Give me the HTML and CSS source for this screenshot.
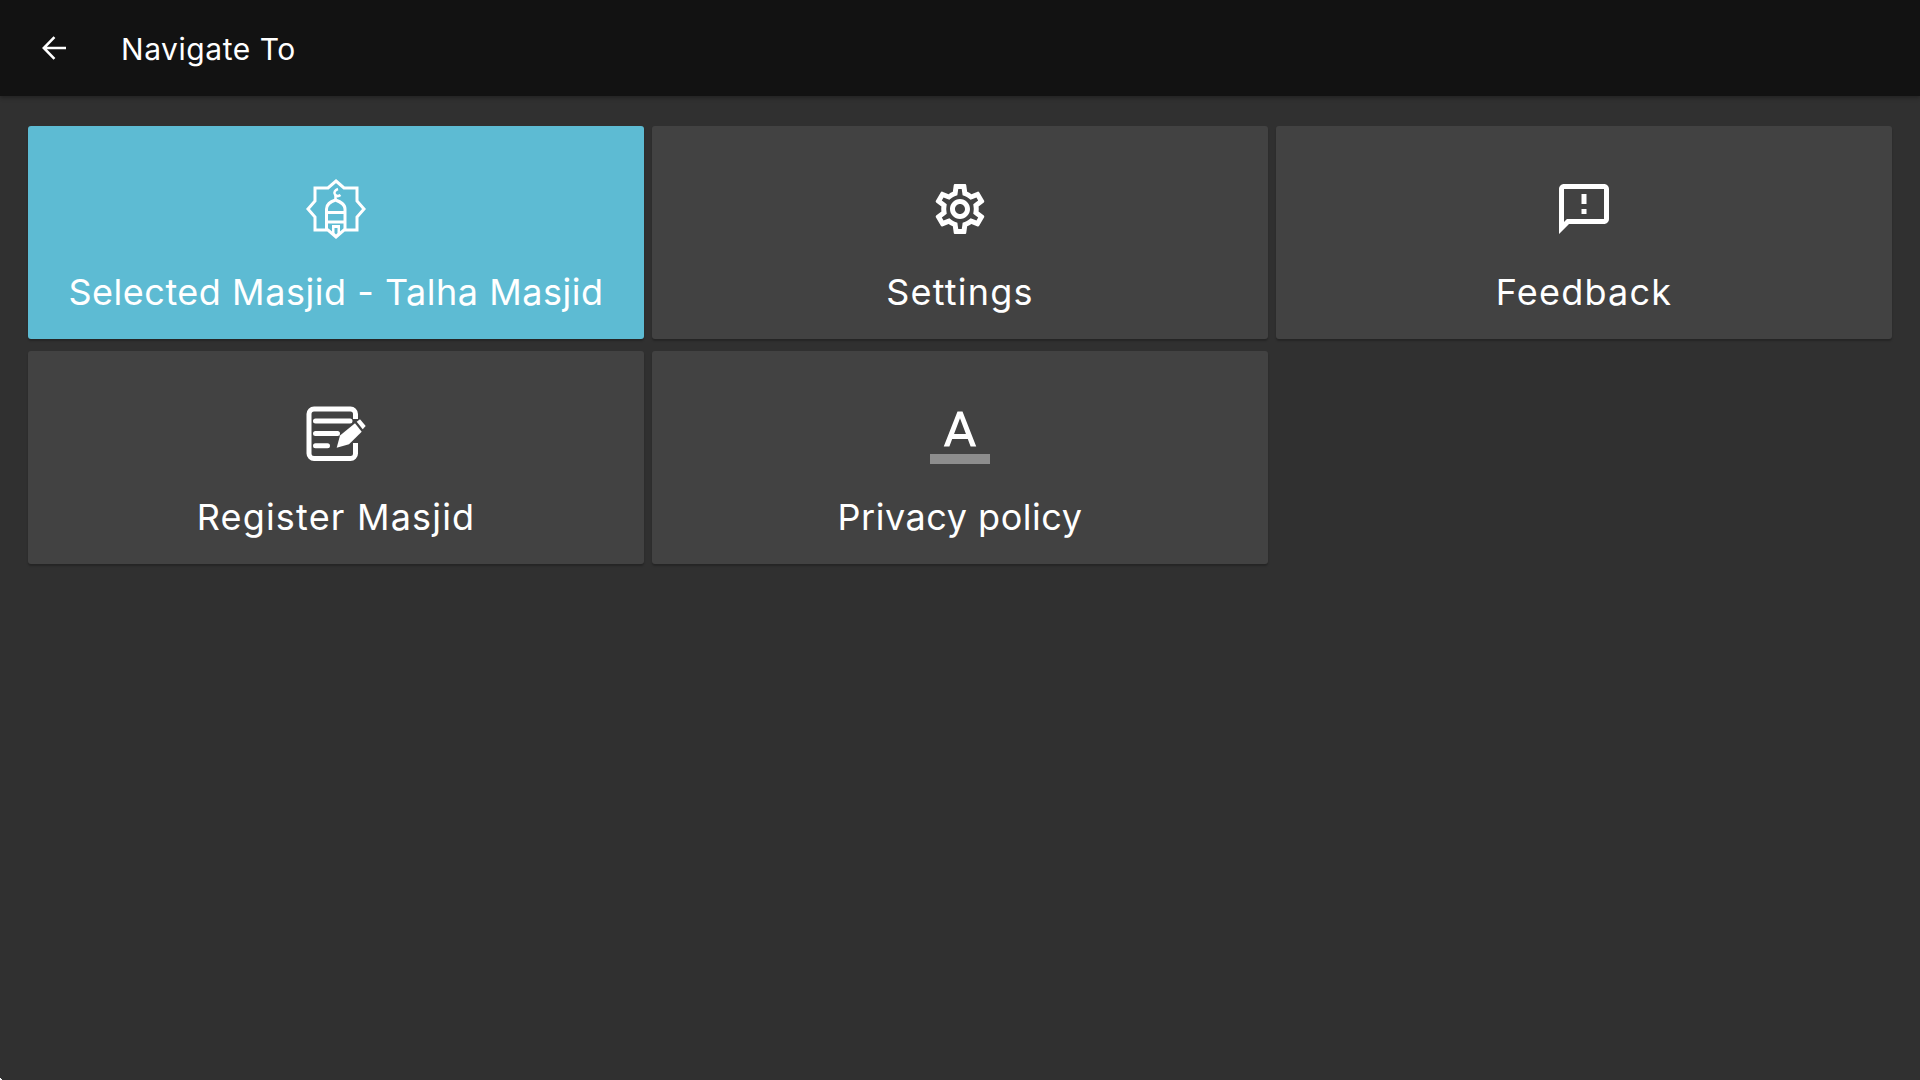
FILE: index.html
```html
<!DOCTYPE html>
<html lang="en">
<head>
<meta charset="utf-8">
<title>Navigate To</title>
<link rel="stylesheet" href="styles.css">
</head>
<body>
<header class="toolbar">
  <svg class="back" viewBox="0 0 24 24"><path d="M20 12H5.500M12.300 4.700L5.200 12l7.100 7.300"/></svg>
  <h1 class="title">Navigate To</h1>
</header>
<main class="grid">
  <a class="card card-active">
    <svg class="icon" viewBox="0 0 60 60">
      <g class="line">
        <path d="M30 2l8 7h13v13l7 8-7 8v13H38l-8 7-8-7H9V38l-7-8 7-8V9h13z"/>
        <path d="M20.500 51V30c0-5 3.500-7 9-9 5.500 2 9.500 4 9.500 9v21"/>
        <path d="M20.500 33.500h18.500M20.500 43h18.500"/>
        <path d="M32 10c-3 1-4.500 3.500-3 5.500s3.500 2 5.500.5" class="thin"/>
        <path d="M29.500 16v5" class="thin"/>
      </g>
      <path class="door" d="M26 46h8v9l-4 4-4-4z"/>
      <path class="door-in" d="M28.500 49h3v5l-1.500 1.500-1.500-1.500z"/>
    </svg>
    <span class="label">Selected Masjid - Talha Masjid</span>
  </a>
  <a class="card">
    <svg class="icon" viewBox="0 0 24 24"><path d="M19.430 12.980c.04-.32.07-.64.07-.98 0-.34-.03-.66-.07-.98l2.110-1.650c.19-.15.24-.42.12-.64l-2-3.460c-.09-.16-.26-.25-.44-.25-.06 0-.12.01-.17.03l-2.490 1c-.52-.4-1.080-.73-1.690-.98l-.38-2.650C14.460 2.180 14.250 2 14 2h-4c-.25 0-.46.18-.49.42l-.38 2.650c-.61.25-1.170.59-1.690.98l-2.490-1c-.06-.02-.12-.03-.18-.03-.17 0-.34.09-.43.25l-2 3.460c-.13.22-.07.49.12.64l2.110 1.650c-.04.32-.07.65-.07.98 0 .33.03.66.07.98l-2.110 1.650c-.19.15-.24.42-.12.64l2 3.460c.09.16.26.25.44.25.06 0 .12-.01.17-.03l2.490-1c.52.4 1.080.73 1.690.98l.38 2.650c.03.24.24.42.49.42h4c.25 0 .46-.18.49-.42l.38-2.650c.61-.25 1.170-.59 1.690-.98l2.490 1c.06.02.12.03.18.03.17 0 .34-.09.43-.25l2-3.460c.12-.22.07-.49-.12-.64l-2.110-1.650zm-1.980-1.710c.04.31.05.52.05.73 0 .21-.02.43-.05.73l-.14 1.130.89.7 1.080.84-.7 1.210-1.270-.51-1.040-.42-.9.68c-.43.32-.84.56-1.250.73l-1.060.43-.16 1.130-.2 1.350h-1.400l-.19-1.350-.16-1.130-1.060-.43c-.43-.18-.83-.41-1.230-.71l-.91-.7-1.060.43-1.270.51-.7-1.210 1.080-.84.89-.7-.14-1.130c-.03-.31-.05-.54-.05-.74s.02-.43.05-.73l.14-1.130-.89-.7-1.080-.84.7-1.210 1.270.51 1.040.42.9-.68c.43-.32.84-.56 1.250-.73l1.060-.43.16-1.130.2-1.350h1.390l.19 1.350.16 1.130 1.060.43c.43.18.83.41 1.230.71l.91.7 1.060-.43 1.270-.51.7 1.210-1.070.85-.89.7.14 1.130zM12 8c-2.210 0-4 1.790-4 4s1.790 4 4 4 4-1.790 4-4-1.790-4-4-4zm0 6c-1.100 0-2-.9-2-2s.9-2 2-2 2 .9 2 2-.9 2-2 2z"/></svg>
    <span class="label label-wide">Settings</span>
  </a>
  <a class="card">
    <svg class="icon" viewBox="0 0 24 24"><path d="M20 2H4c-1.100 0-1.990.9-1.990 2L2 22l4-4h14c1.100 0 2-.9 2-2V4c0-1.100-.9-2-2-2zm0 14H5.170L4 17.170V4h16v12zm-9-4h2v2h-2zm0-6h2v4h-2z"/></svg>
    <span class="label label-wide">Feedback</span>
  </a>
  <a class="card">
    <svg class="icon" viewBox="0 0 60 60">
      <path class="box" d="M49.500 15V10a5 5 0 0 0-5-5H8a5 5 0 0 0-5 5v39.500a5 5 0 0 0 5 5h36.500a5 5 0 0 0 5-5V39"/>
      <path class="rows" d="M9.500 17h34.500M9.500 29.500h22M9.500 41.700h12"/>
      <path d="M30.700 43.700L34 31.500 49 19.300l6.700 8.400L43 40.300z"/>
      <path d="M50.700 17.700l3.300-2.400 5.700 6.700-3 3.300z"/>
    </svg>
    <span class="label label-wide">Register Masjid</span>
  </a>
  <a class="card">
    <svg class="icon" viewBox="0 0 24 24"><path class="bar" d="M0 20h24v4H0z"/><path d="M11 3L5.500 17h2.250l1.120-3h6.250l1.120 3h2.250L13 3h-2zm-1.380 9L12 5.670 14.380 12H9.620z"/></svg>
    <span class="label">Privacy policy</span>
  </a>
</main>
<div class="corner"></div>
</body>
</html>
```
FILE: styles.css
```css
* { box-sizing: border-box; }
html, body { height: 100%; }
body {
  margin: 0;
  background: #303030;
  color: #fff;
  font-family: Inter, "Noto Sans", sans-serif;
  overflow: hidden;
}
.toolbar {
  height: 96px;
  background: #121212;
  display: flex;
  align-items: center;
  padding-left: 36px;
  gap: 49px;
  box-shadow: 0 2px 4px rgba(0, 0, 0, .3);
}
.back { width: 36px; height: 36px; fill: none; stroke: #fff; stroke-width: 1.700; }
.title {
  margin: 2px 0 0;
  font-size: 30px;
  font-weight: 400;
  letter-spacing: .55px;
}
.grid {
  display: grid;
  grid-template-columns: repeat(3, 616px);
  grid-auto-rows: 213px;
  column-gap: 8px;
  row-gap: 12px;
  padding: 30px 28px 0;
}
.card {
  background: #424242;
  border-radius: 3px;
  box-shadow: 0 2px 2px rgba(0, 0, 0, .24);
  display: flex;
  flex-direction: column;
  align-items: center;
  padding-top: 53px;
  gap: 31px;
}
.card-active { background: #5dbbd3; }
.icon { width: 60px; height: 60px; fill: #fff; overflow: visible; }
.label {
  font-size: 36px;
  line-height: 44px;
  font-weight: 400;
  letter-spacing: .53px;
}
.label-wide { letter-spacing: 1.2px; }
.line { fill: none; stroke: #fff; stroke-width: 3; }
.line .thin { stroke-width: 2.500; }
.door { fill: #fff; }
.door-in { fill: #5dbbd3; }
.box { fill: none; stroke: #fff; stroke-width: 5; }
.rows { fill: none; stroke: #fff; stroke-width: 5; stroke-linecap: round; }
.bar { fill: #fff; fill-opacity: .4; }
.corner {
  position: fixed;
  left: 0;
  bottom: 0;
  width: 3px;
  height: 3px;
  background: linear-gradient(45deg, #fff 50%, transparent 50%);
}
```
